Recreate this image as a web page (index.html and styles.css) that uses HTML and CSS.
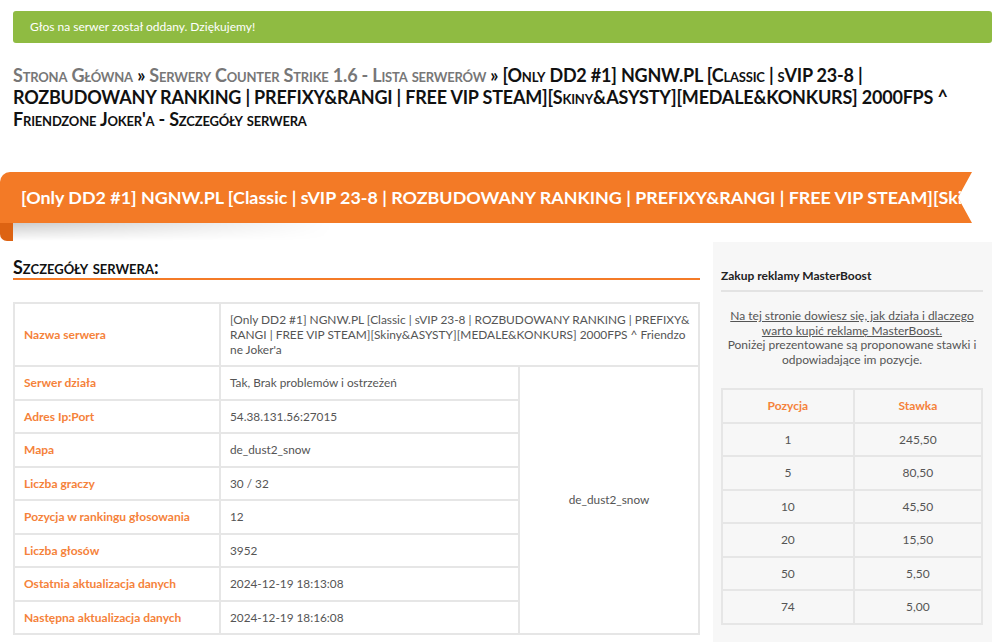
FILE: index.html
```html
<!DOCTYPE html>
<html lang="pl">
<head>
    <meta charset="UTF-8">
    <meta name="viewport" content="width=device-width, initial-scale=1.0">
    <title>Szczegóły serwera</title>
    <link rel="stylesheet" href="styles.css">
</head>
<body>

<div class="page">
    <div class="alert">Głos na serwer został oddany. Dziękujemy!</div>

    <div class="breadcrumb">
        <a href="#">Strona Główna</a> » <a href="#">Serwery Counter Strike 1.6 - Lista serwerów</a> » <span class="current">[Only DD2 #1] NGNW.PL [Classic | sVIP 23-8 | ROZBUDOWANY RANKING | PREFIXY&amp;RANGI | FREE VIP STEAM][Skiny&amp;ASYSTY][MEDALE&amp;KONKURS] 2000FPS ^ Friendzone Joker'a - Szczegóły serwera</span>
    </div>

    <div class="ribbon-wrap">
        <div class="ribbon">[Only DD2 #1] NGNW.PL [Classic | sVIP 23-8 | ROZBUDOWANY RANKING | PREFIXY&amp;RANGI | FREE VIP STEAM][Skiny&amp;ASYSTY][MEDALE&amp;KONKURS] 2000FPS ^ Friendzone Joker'a</div>
    </div>

    <div class="content">
        <div class="main">
            <h2 class="section-title">Szczegóły serwera:</h2>

            <table class="details">
                <colgroup>
                    <col class="col-label">
                    <col class="col-value">
                    <col>
                </colgroup>
                <tr>
                    <td class="label">Nazwa serwera</td>
                    <td class="long" colspan="2">[Only DD2 #1] NGNW.PL [Classic | sVIP 23-8 | ROZBUDOWANY RANKING | PREFIXY&amp;RANGI | FREE VIP STEAM][Skiny&amp;ASYSTY][MEDALE&amp;KONKURS] 2000FPS ^ Friendzone Joker'a</td>
                </tr>
                <tr>
                    <td class="label">Serwer działa</td>
                    <td>Tak, Brak problemów i ostrzeżeń</td>
                    <td class="map" rowspan="8">de_dust2_snow</td>
                </tr>
                <tr>
                    <td class="label">Adres Ip:Port</td>
                    <td>54.38.131.56:27015</td>
                </tr>
                <tr>
                    <td class="label">Mapa</td>
                    <td>de_dust2_snow</td>
                </tr>
                <tr>
                    <td class="label">Liczba graczy</td>
                    <td>30 / 32</td>
                </tr>
                <tr>
                    <td class="label">Pozycja w rankingu głosowania</td>
                    <td>12</td>
                </tr>
                <tr>
                    <td class="label">Liczba głosów</td>
                    <td>3952</td>
                </tr>
                <tr>
                    <td class="label">Ostatnia aktualizacja danych</td>
                    <td>2024-12-19 18:13:08</td>
                </tr>
                <tr>
                    <td class="label">Następna aktualizacja danych</td>
                    <td>2024-12-19 18:16:08</td>
                </tr>
            </table>
        </div>

        <div class="sidebar">
            <h3 class="sidebar-title">Zakup reklamy MasterBoost</h3>
            <p class="sidebar-text">
                <a href="#">Na tej stronie dowiesz się, jak działa i dlaczego warto kupić reklamę MasterBoost.</a><br>
                Poniżej prezentowane są proponowane stawki i odpowiadające im pozycje.
            </p>
            <table class="rates">
                <tr><th>Pozycja</th><th>Stawka</th></tr>
                <tr><td>1</td><td>245,50</td></tr>
                <tr><td>5</td><td>80,50</td></tr>
                <tr><td>10</td><td>45,50</td></tr>
                <tr><td>20</td><td>15,50</td></tr>
                <tr><td>50</td><td>5,50</td></tr>
                <tr><td>74</td><td>5,00</td></tr>
            </table>
        </div>
    </div>
</div>

</body>
</html>
```

FILE: styles.css
```css
body {
    margin: 0;
    font-family: Lato, "Open Sans", sans-serif;
    color: #555;
    background-color: #fff;
}
.page {
    width: 979px;
    margin-left: 13px;
    padding-top: 11px;
}
.alert {
    background-color: #8fbb42;
    color: #fff;
    font-size: 12px;
    height: 32px;
    line-height: 32px;
    padding: 0 17px;
    border-radius: 3px;
}
.breadcrumb {
    margin-top: 21px;
    font-size: 18px;
    line-height: 22px;
    font-weight: 700;
    font-variant: small-caps;
    letter-spacing: -0.2px;
    color: #111;
}
.breadcrumb a {
    color: #777;
    text-decoration: none;
}
.ribbon-wrap {
    position: relative;
    width: 972px;
    margin: 42px 0 0 -13px;
    padding-bottom: 18px;
}
.ribbon {
    height: 51px;
    line-height: 51px;
    padding-left: 21px;
    background-color: #f37a26;
    border-radius: 10px 0 0 0;
    clip-path: polygon(0 0, 100% 0, calc(100% - 14px) 50%, 100% 100%, 0 100%);
    color: #fff;
    font-size: 17.9px;
    font-weight: 700;
    white-space: nowrap;
    overflow: hidden;
}
/* curled end of the ribbon */
.ribbon-wrap::before {
    content: "";
    position: absolute;
    left: 0;
    top: 48px;
    width: 13px;
    height: 21px;
    background-color: #dd6312;
    border-radius: 0 0 0 7px;
}
.ribbon-wrap::after {
    content: "";
    position: absolute;
    left: 13px;
    top: 51px;
    width: 320px;
    height: 18px;
    background: linear-gradient(to bottom, rgba(0, 0, 0, 0.2), rgba(0, 0, 0, 0));
    -webkit-mask-image: linear-gradient(to right, #000, transparent);
    mask-image: linear-gradient(to right, #000, transparent);
}
.content {
    display: grid;
    grid-template-columns: 687px 279px;
    column-gap: 13px;
    align-items: start;
}
.section-title {
    margin: 16px 0 22px;
    font-size: 18px;
    line-height: 21px;
    font-weight: 700;
    font-variant: small-caps;
    color: #111;
    border-bottom: 2px solid #f47b27;
}
.details {
    width: 100%;
    border-collapse: collapse;
    border: 2px solid #e6e6e6;
}
.details td {
    border: 2px solid #e6e6e6;
    padding: 8px 9px;
    font-size: 11.8px;
    line-height: 15.5px;
    color: #555;
    vertical-align: middle;
}
.details .col-label {
    width: 206px;
}
.details .col-value {
    width: 299px;
}
.details td.label {
    font-size: 12px;
    font-weight: 700;
    color: #f5823a;
}
.details td.long {
    padding-right: 7px;
    font-size: 11.9px;
    line-height: 15px;
    word-break: break-all;
}
.details td.map {
    text-align: center;
}
.sidebar {
    margin-top: 1px;
    min-height: 420px;
    padding: 26px 9px 20px 8px;
    background-color: #f7f7f7;
}
.sidebar-title {
    margin: 0;
    padding-bottom: 7px;
    font-size: 12px;
    line-height: 15px;
    font-weight: 700;
    color: #222;
    border-bottom: 2px solid #e3e3e3;
}
.sidebar-text {
    margin: 17px 0 21px;
    font-size: 12px;
    line-height: 14.5px;
    text-align: center;
}
.sidebar-text a {
    color: #555;
}
.rates {
    width: 100%;
    border-collapse: collapse;
    border: 2px solid #e6e6e6;
}
.rates th,
.rates td {
    border: 2px solid #e6e6e6;
    padding: 8px;
    font-size: 12px;
    line-height: 15.5px;
    text-align: center;
}
.rates th {
    color: #f5823a;
    font-weight: 700;
}
```
